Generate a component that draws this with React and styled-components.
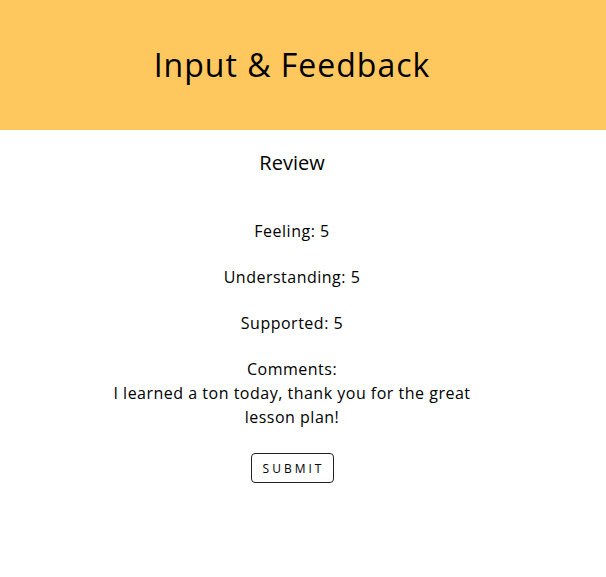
import React from 'react';
import styled, { createGlobalStyle } from 'styled-components';

const GlobalStyle = createGlobalStyle`
    body {
        margin: 0;
        background: #ffffff;
        font-family: 'Open Sans', 'Liberation Sans', sans-serif;
        color: #000000;
    }
`;

const Header = styled.header`
    height: 130px;
    background: #ffc85f;
    display: flex;
    align-items: center;
    justify-content: center;
    padding-right: 22px;
`;

const Title = styled.h1`
    margin: 0;
    font-size: 32px;
    font-weight: 400;
    line-height: 48px;
    letter-spacing: 1px;
`;

const Main = styled.main`
    display: flex;
    flex-direction: column;
    align-items: center;
    padding-right: 22px;
    text-align: center;
`;

const Heading = styled.h2`
    margin: 18px 0 41px;
    font-size: 20px;
    font-weight: 400;
    line-height: 30px;
`;

const Stats = styled.div`
    display: flex;
    flex-direction: column;
    align-items: center;
    gap: 22px;
`;

const Stat = styled.p`
    margin: 0;
    font-size: 16px;
    line-height: 24px;
    letter-spacing: 0.5px;
    max-width: ${props => props.wide ? '380px' : 'none'};
`;

const SubmitButton = styled.button`
    margin-top: 24px;
    width: 83px;
    height: 30px;
    padding: 0 0 0 3px;
    background: #ffffff;
    border: 1px solid #222222;
    border-radius: 4px;
    font-family: 'Open Sans', 'Liberation Sans', sans-serif;
    font-size: 12px;
    letter-spacing: 3px;
    color: #000000;
    cursor: pointer;
`;

function App() {
    const review = {
        feeling: 5,
        understanding: 5,
        supported: 5,
        comments: 'I learned a ton today, thank you for the great lesson plan!',
    };

    return (
        <>
            <GlobalStyle />
            <Header>
                <Title>Input &amp; Feedback</Title>
            </Header>
            <Main>
                <Heading>Review</Heading>
                <Stats>
                    <Stat>Feeling: {review.feeling}</Stat>
                    <Stat>Understanding: {review.understanding}</Stat>
                    <Stat>Supported: {review.supported}</Stat>
                    <Stat wide>
                        Comments:<br />
                        {review.comments}
                    </Stat>
                </Stats>
                <SubmitButton>SUBMIT</SubmitButton>
            </Main>
        </>
    );
}

export default App;
